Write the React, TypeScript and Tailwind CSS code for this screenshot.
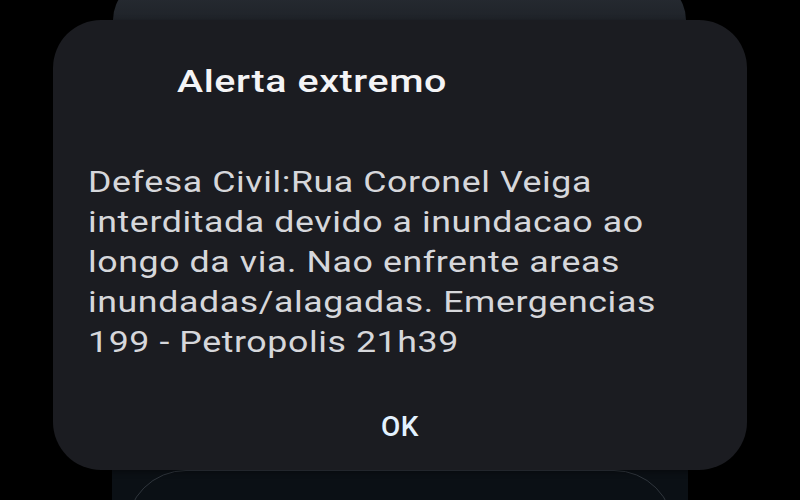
import React from "react";

export default function App() {
  return (
    <div className="relative w-[800px] h-[500px] bg-black overflow-hidden font-['Roboto',sans-serif]">
      {/* background app surface */}
      <div className="flex flex-col justify-between h-full">
        <div className="ml-[113px] w-[573px] h-[40px] mt-[-20px] rounded-t-[50px] bg-gradient-to-b from-[#2a2f36] to-[#1f2329]" />
        <div className="ml-[112px] w-[576px] h-[32px] bg-[#0b1015] overflow-hidden">
          <div className="mx-[14px] mt-[2px] h-[80px] rounded-t-[60px] border border-[#2f353c]" />
        </div>
      </div>

      {/* dialog */}
      <div className="absolute left-[53px] top-[20px] w-[694px] h-[450px] rounded-[48px] bg-[#1b1c21] flex flex-col shadow-[0_2px_6px_rgba(0,0,0,0.4)]">
        <div className="pt-[43px] pl-[124px]">
          <div className="inline-block origin-left scale-x-[1.23] text-[32px] leading-[36px] font-medium text-[#f4f4f6] tracking-[0.5px] whitespace-nowrap">
            Alerta extremo
          </div>
        </div>
        <div className="mt-[63px] pl-[35px]">
          <div className="inline-block origin-left scale-x-[1.19] text-[30px] leading-[40px] text-[#d6d7db] whitespace-nowrap tracking-[0.5px]">
            Defesa Civil:Rua Coronel Veiga
            <br />
            interditada devido a inundacao ao
            <br />
            longo da via. Nao enfrente areas
            <br />
            inundadas/alagadas. Emergencias
            <br />
            199 - Petropolis 21h39
          </div>
        </div>
        <div className="mt-[49px] flex justify-center">
          <button className="text-[28px] leading-[32px] font-medium text-[#e3f2ff] tracking-[0.5px]">OK</button>
        </div>
      </div>
    </div>
  );
}
